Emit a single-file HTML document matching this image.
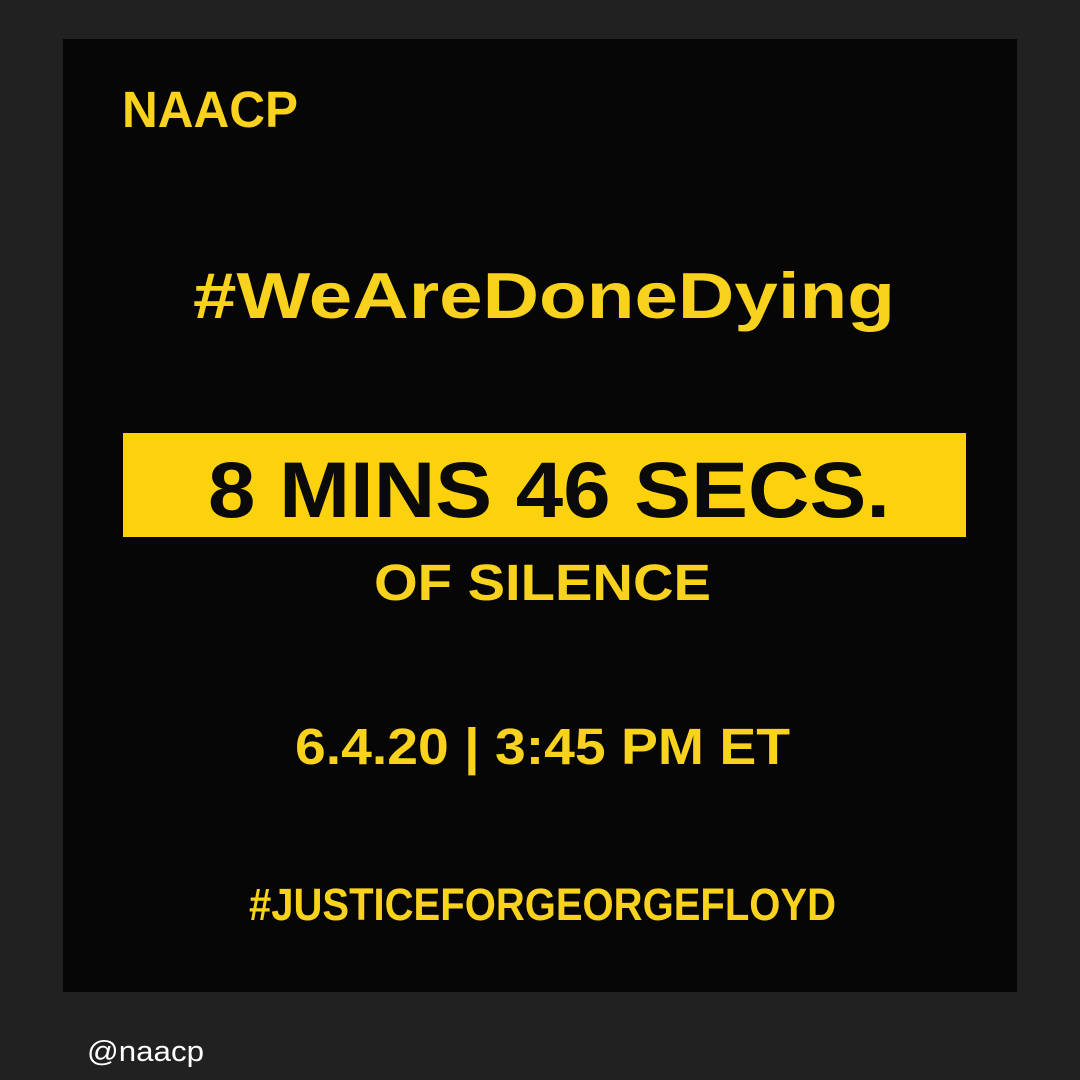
<!DOCTYPE html>
<html><head><style>
html,body{margin:0;padding:0;background:#212121;}
svg{display:block}
text{font-family:"Liberation Sans",sans-serif;font-weight:bold;}
</style></head><body>
<svg width="1080" height="1080" viewBox="0 0 1080 1080" xmlns="http://www.w3.org/2000/svg">
<rect width="1080" height="1080" fill="#212121"/>
<rect x="63" y="39" width="954" height="953" fill="#060606"/>
<g fill="#f8d21c">
<text x="122" y="127" font-size="51" textLength="176" lengthAdjust="spacingAndGlyphs">NAACP</text>
<text x="193" y="318" font-size="65" textLength="702" lengthAdjust="spacingAndGlyphs">#WeAreDoneDying</text>
<rect x="123" y="433" width="843" height="104" fill="#fcd20f"/>
<text x="374" y="600" font-size="51" textLength="337" lengthAdjust="spacingAndGlyphs">OF SILENCE</text>
<text x="295" y="764" font-size="51" textLength="495" lengthAdjust="spacingAndGlyphs">6.4.20 | 3:45 PM ET</text>
<text x="249" y="920" font-size="45" transform="translate(249 920) scale(1 1) translate(-249 -920)" textLength="587" lengthAdjust="spacingAndGlyphs" letter-spacing="0">#JUSTICEFORGEORGEFLOYD</text>
</g>
<text x="208" y="517" font-size="79" fill="#0a0a0a" textLength="682" lengthAdjust="spacingAndGlyphs">8 MINS 46 SECS.</text>
<text x="87" y="1061" font-size="29" fill="#ffffff" style="font-weight:normal" textLength="117" lengthAdjust="spacingAndGlyphs">@naacp</text>
</svg>
</body></html>
